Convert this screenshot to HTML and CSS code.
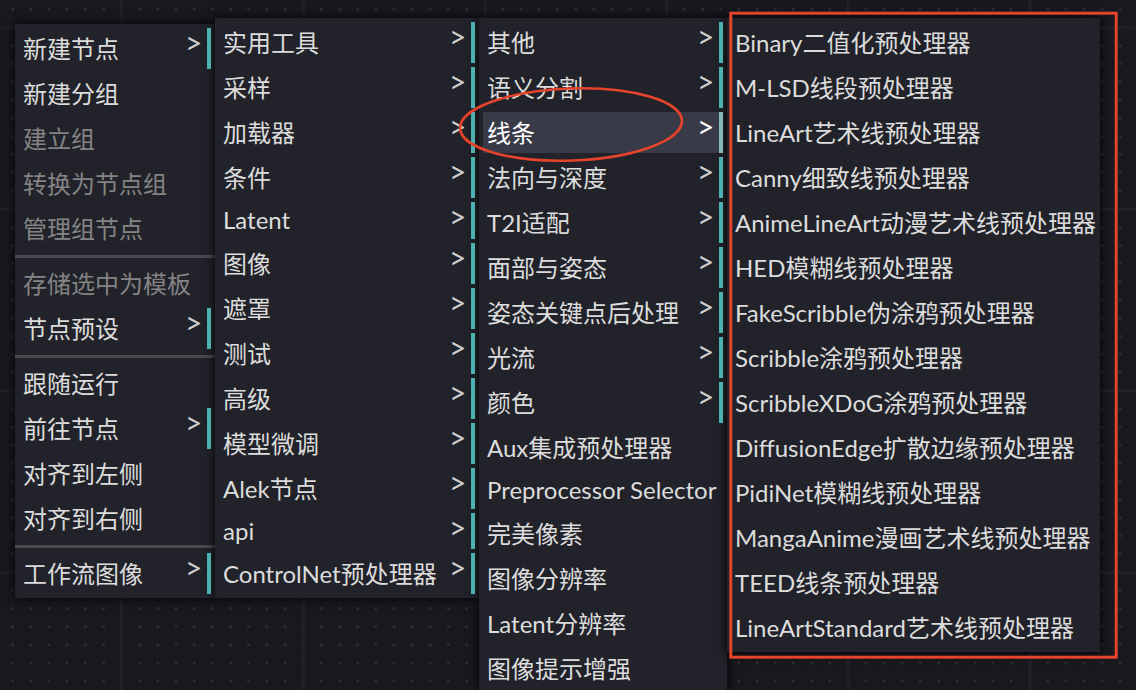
FILE: index.html
```html
<!DOCTYPE html>
<html lang="zh-CN">
<head>
<meta charset="utf-8">
<title>Context menu</title>
<link rel="stylesheet" href="styles.css">
</head>
<body>
<div class="menus">
  <div class="menu m1">
    <div class="item sub">新建节点</div>
    <div class="item">新建分组</div>
    <div class="item dim">建立组</div>
    <div class="item dim">转换为节点组</div>
    <div class="item dim">管理组节点</div>
    <div class="sep"></div>
    <div class="item dim">存储选中为模板</div>
    <div class="item sub">节点预设</div>
    <div class="sep"></div>
    <div class="item">跟随运行</div>
    <div class="item sub">前往节点</div>
    <div class="item">对齐到左侧</div>
    <div class="item">对齐到右侧</div>
    <div class="sep"></div>
    <div class="item sub">工作流图像</div>
  </div>
  <div class="menu m2">
    <div class="item sub">实用工具</div>
    <div class="item sub">采样</div>
    <div class="item sub">加载器</div>
    <div class="item sub">条件</div>
    <div class="item sub short">Latent</div>
    <div class="item sub">图像</div>
    <div class="item sub">遮罩</div>
    <div class="item sub">测试</div>
    <div class="item sub">高级</div>
    <div class="item sub">模型微调</div>
    <div class="item sub">Alek节点</div>
    <div class="item sub short">api</div>
    <div class="item sub">ControlNet预处理器</div>
  </div>
  <div class="menu m3">
    <div class="item sub">其他</div>
    <div class="item sub">语义分割</div>
    <div class="item sub active">线条</div>
    <div class="item sub">法向与深度</div>
    <div class="item sub">T2I适配</div>
    <div class="item sub">面部与姿态</div>
    <div class="item sub">姿态关键点后处理</div>
    <div class="item sub">光流</div>
    <div class="item sub">颜色</div>
    <div class="item">Aux集成预处理器</div>
    <div class="item short">Preprocessor Selector</div>
    <div class="item">完美像素</div>
    <div class="item">图像分辨率</div>
    <div class="item">Latent分辨率</div>
    <div class="item">图像提示增强</div>
  </div>
  <div class="menu m4">
    <div class="item">Binary二值化预处理器</div>
    <div class="item">M-LSD线段预处理器</div>
    <div class="item">LineArt艺术线预处理器</div>
    <div class="item">Canny细致线预处理器</div>
    <div class="item">AnimeLineArt动漫艺术线预处理器</div>
    <div class="item">HED模糊线预处理器</div>
    <div class="item">FakeScribble伪涂鸦预处理器</div>
    <div class="item">Scribble涂鸦预处理器</div>
    <div class="item">ScribbleXDoG涂鸦预处理器</div>
    <div class="item">DiffusionEdge扩散边缘预处理器</div>
    <div class="item">PidiNet模糊线预处理器</div>
    <div class="item">MangaAnime漫画艺术线预处理器</div>
    <div class="item">TEED线条预处理器</div>
    <div class="item">LineArtStandard艺术线预处理器</div>
  </div>
</div>
<svg class="annot" width="1136" height="690" viewBox="0 0 1136 690">
  <ellipse cx="571" cy="124.5" rx="111" ry="36" transform="rotate(-2 571 124.5)" fill="none" stroke="#e5432b" stroke-width="2.6"/>
  <rect x="730.8" y="13.2" width="385.4" height="644" fill="none" stroke="#e5432b" stroke-width="3"/>
</svg>
</body>
</html>
```
FILE: styles.css
```css
html, body {
  margin: 0;
  padding: 0;
}

body {
  position: relative;
  width: 1136px;
  height: 690px;
  overflow: hidden;
  background-color: #18191e;
  background-image:
    linear-gradient(90deg, #202128 3px, transparent 3px),
    linear-gradient(180deg, #202128 3px, transparent 3px),
    radial-gradient(circle, #2a2c34 1.3px, transparent 1.9px);
  background-size: 181.7px 181.7px, 181.7px 181.7px, 18.17px 18.17px;
  background-position: 120.2px 0, 0 26.1px, 3.6px 0.3px;
  font-family: "Lato", "Noto Sans CJK SC", sans-serif;
}

.menus {
  display: flex;
  align-items: flex-start;
  padding: 18px 0 0 15px;
}

.menu {
  flex: none;
  display: flex;
  flex-direction: column;
  background: #22232a;
  box-shadow: 0 0 10px #000;
  padding: 2px 0;
}

.m1 { width: 200px; margin-top: 6px; }
.m2 { width: 264px; }
.m3 { width: 248px; }
.m4 { width: 373px; }

.item {
  flex: none;
  position: relative;
  box-sizing: border-box;
  height: 41px;
  margin: 2px 4px;
  padding: 0 24px 2px 4px;
  display: flex;
  align-items: center;
  font-size: 24px;
  color: #dcdcdc;
  white-space: nowrap;
}

.item.short { height: 36.7px; }

.item.dim { color: #848484; }

.item.sub { border-right: 4px solid #4eb0b0; }

.item.sub::after {
  content: ">";
  position: absolute;
  right: 4.5px;
  top: -1px;
  font-size: 30px;
  line-height: 30px;
  color: #d0d0d0;
}

.item.active {
  background: #393a47;
  color: #ffffff;
  border-right-color: #87b9b9;
}

.item.active::after { color: #ffffff; }

.sep {
  flex: none;
  height: 3px;
  margin: 4px 0 3px;
  background: #4a4b50;
}

.annot {
  position: absolute;
  left: 0;
  top: 0;
  pointer-events: none;
}
```
